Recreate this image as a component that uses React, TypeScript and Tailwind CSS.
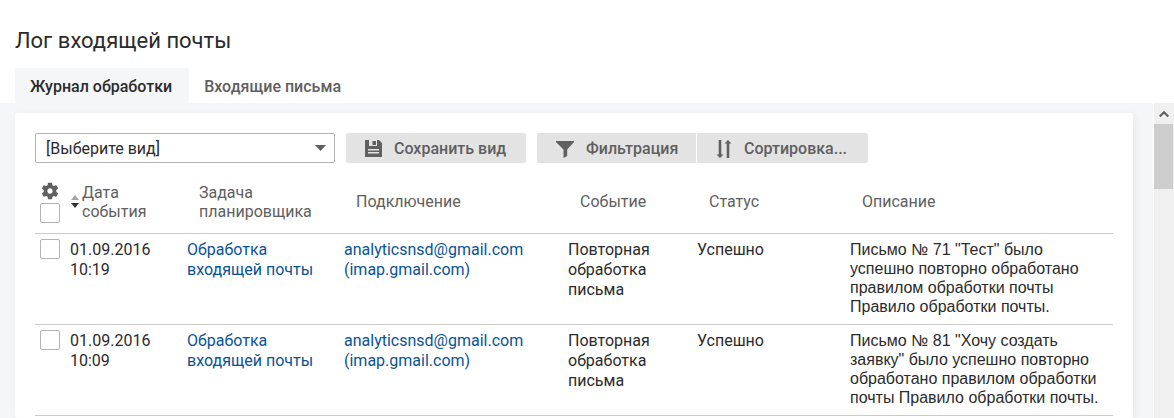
import React from "react";

type Entry = {
  date: string;
  time: string;
  task: string;
  account: string;
  host: string;
  event: string;
  status: string;
  description: string;
};

const entries: Entry[] = [
  {
    date: "01.09.2016",
    time: "10:19",
    task: "Обработка входящей почты",
    account: "analyticsnsd@gmail.com",
    host: "(imap.gmail.com)",
    event: "Повторная обработка письма",
    status: "Успешно",
    description:
      'Письмо № 71 "Тест" было успешно повторно обработано правилом обработки почты Правило обработки почты.',
  },
  {
    date: "01.09.2016",
    time: "10:09",
    task: "Обработка входящей почты",
    account: "analyticsnsd@gmail.com",
    host: "(imap.gmail.com)",
    event: "Повторная обработка письма",
    status: "Успешно",
    description:
      'Письмо № 81 "Хочу создать заявку" было успешно повторно обработано правилом обработки почты Правило обработки почты.',
  },
];

function SaveIcon() {
  return (
    <svg width="17" height="17" viewBox="0 0 17 17" aria-hidden="true">
      <path fill="#606060" d="M0 0h14l3 3v14H0z" />
      <path fill="#e3e3e3" d="M4 0h8v6H4zM3 9h11v1.500H3zM3 12h11v1.500H3z" />
      <path fill="#606060" d="M7.500 1H11v4H7.500z" />
    </svg>
  );
}

function FunnelIcon() {
  return (
    <svg width="18" height="18" viewBox="0 0 18 18" aria-hidden="true">
      <path fill="#606060" d="M0 1h18v1L11.200 9.500V16L7.500 18V9.500L0 2z" />
    </svg>
  );
}

function SortIcon() {
  return (
    <svg width="16" height="18" viewBox="0 0 16 18" aria-hidden="true">
      <path
        fill="#606060"
        d="M2.700 0h2.600v14.500H7.500L4 18 .5 14.500h2.200zM10.700 18h2.600V3.500h2.200L12 0 8.500 3.500h2.200z"
      />
    </svg>
  );
}

function GearIcon() {
  return (
    <svg width="20" height="20" viewBox="0 0 24 24" aria-hidden="true">
      <path
        fill="#606060"
        d="M19.43 12.98c.04-.32.07-.64.07-.98s-.03-.66-.07-.98l2.11-1.65c.19-.15.24-.42.12-.64l-2-3.46c-.12-.22-.39-.3-.61-.22l-2.49 1c-.52-.4-1.08-.73-1.69-.98l-.38-2.65C14.46 2.18 14.25 2 14 2h-4c-.25 0-.46.18-.49.42l-.38 2.65c-.61.25-1.17.59-1.69.98l-2.49-1c-.23-.09-.49 0-.61.22l-2 3.46c-.13.22-.07.49.12.64l2.11 1.65c-.04.32-.07.65-.07.98s.03.66.07.98l-2.11 1.65c-.19.15-.24.42-.12.64l2 3.46c.12.22.39.3.61.22l2.49-1c.52.4 1.08.73 1.69.98l.38 2.65c.03.24.24.42.49.42h4c.25 0 .46-.18.49-.42l.38-2.65c.61-.25 1.17-.59 1.69-.98l2.49 1c.23.09.49 0 .61-.22l2-3.46c.12-.22.07-.49-.12-.64l-2.11-1.65zM12 15.2c-1.77 0-3.2-1.43-3.2-3.2s1.43-3.2 3.2-3.2 3.2 1.43 3.2 3.2-1.43 3.2-3.2 3.2z"
      />
    </svg>
  );
}

function Checkbox({ label }: { label: string }) {
  return (
    <input
      type="checkbox"
      aria-label={label}
      className="block size-5 appearance-none rounded-xs border border-[#b4b4b4] bg-white checked:bg-[#0b5394]"
    />
  );
}

const tabClass = "h-[35px] pt-[2px] pr-[17px] pl-[15px]";
const buttonClass =
  "flex h-[30px] items-center gap-3 bg-[#e3e3e3] pt-px pl-[19px] font-medium text-[#606060] whitespace-nowrap";
const headClass = "pb-[9px] pl-[15px] font-normal";
const cellClass = "pt-[6px] pb-2 pl-[3px]";
const linkClass = "text-[#0b5394] hover:underline";

export default function App() {
  return (
    <div className="flex h-screen flex-col overflow-hidden bg-white font-['Roboto',sans-serif] text-base leading-5 text-[#2b2b2b]">
      <header className="px-[15px] pt-[25px]">
        <h1 className="text-[22px] leading-8">Лог входящей почты</h1>
        <div role="tablist" className="mt-[11px] flex font-medium">
          <button role="tab" aria-selected="true" className={`${tabClass} rounded-t-xs bg-[#f4f6f8]`}>
            Журнал обработки
          </button>
          <button role="tab" aria-selected="false" className={`${tabClass} text-[#606060]`}>
            Входящие письма
          </button>
        </div>
      </header>

      <div className="flex min-h-0 flex-1 bg-[#f4f6f8]">
        <main className="min-w-0 flex-1 overflow-hidden pt-[10px] pr-[20px] pl-[15px]">
          <section className="min-h-full rounded-xs bg-white px-5 pt-5 shadow-[2px_2px_10px_rgba(0,0,0,0.06)]">
            <div className="flex">
              <div className="relative w-[300px]">
                <select
                  aria-label="Вид"
                  className="h-[30px] w-full appearance-none rounded-xs border border-[#b4b4b4] bg-white px-[10px] pt-px"
                >
                  <option>[Выберите вид]</option>
                </select>
                <svg
                  className="pointer-events-none absolute top-3 right-[9px]"
                  width="11"
                  height="6"
                  viewBox="0 0 11 6"
                  aria-hidden="true"
                >
                  <path fill="#606060" d="M0 0h11L5.500 6z" />
                </svg>
              </div>
              <button className={`${buttonClass} ml-[11px] w-[180px] rounded-xs`}>
                <SaveIcon />
                Сохранить вид
              </button>
              <button className={`${buttonClass} ml-[11px] w-[159px] rounded-l-xs`}>
                <FunnelIcon />
                Фильтрация
              </button>
              <button className={`${buttonClass} ml-px w-[171px] rounded-r-xs`}>
                <SortIcon />
                Сортировка...
              </button>
            </div>

            <table className="mt-4 w-full table-fixed border-collapse text-left">
              <colgroup>
                <col className="w-8" />
                <col className="w-[117px]" />
                <col className="w-[157px]" />
                <col className="w-[224px]" />
                <col className="w-[129px]" />
                <col className="w-[153px]" />
                <col />
              </colgroup>
              <thead className="leading-[19px] text-[#606060]">
                <tr className="border-b border-[#cbcbcb]">
                  <th className="pt-[2px] pb-[10px] pl-[5px]">
                    <button aria-label="Настройка столбцов" className="block">
                      <GearIcon />
                    </button>
                    <div className="pt-[2px]">
                      <Checkbox label="Выбрать все" />
                    </div>
                  </th>
                  <th className="pb-[9px] pl-1 font-normal">
                    <div className="flex items-center gap-[3px]">
                      <svg width="8" height="13" viewBox="0 0 8 13" aria-hidden="true">
                        <path fill="#a6a6a6" d="M4 0l4 5H0z" />
                        <path fill="#333" d="M0 8h8l-4 5z" />
                      </svg>
                      <span>
                        Дата
                        <br />
                        события
                      </span>
                    </div>
                  </th>
                  <th className={headClass}>
                    Задача
                    <br />
                    планировщика
                  </th>
                  <th className={headClass}>Подключение</th>
                  <th className={headClass}>Событие</th>
                  <th className={headClass}>Статус</th>
                  <th className={headClass}>Описание</th>
                </tr>
              </thead>
              <tbody className="align-top">
                {entries.map((entry) => (
                  <tr key={entry.time} className="border-b border-[#cbcbcb]">
                    <td className="pt-[5px] pl-[5px]">
                      <Checkbox label={`Выбрать ${entry.date} ${entry.time}`} />
                    </td>
                    <td className={cellClass}>
                      {entry.date}
                      <br />
                      {entry.time}
                    </td>
                    <td className={`${cellClass} pr-5`}>
                      <a href="#task" className={linkClass}>
                        {entry.task}
                      </a>
                    </td>
                    <td className={cellClass}>
                      <a href="#connection" className={linkClass}>
                        {entry.account}
                        <br />
                        {entry.host}
                      </a>
                    </td>
                    <td className={`${cellClass} pr-5`}>{entry.event}</td>
                    <td className={cellClass}>{entry.status}</td>
                    <td className="pt-[6px] pr-2 pb-2 pl-[3px] font-['Liberation_Sans',Arial,sans-serif] leading-[19px]">
                      {entry.description}
                    </td>
                  </tr>
                ))}
              </tbody>
            </table>
          </section>
        </main>

        <div aria-hidden="true" className="w-[21px] shrink-0 border-l border-white bg-[#f0f0f0] pr-px">
          <div className="flex h-[21px] items-center justify-center">
            <svg width="10" height="8" viewBox="0 0 10 8">
              <path fill="none" stroke="#606060" strokeWidth="2.200" d="M.7 6.500L5 2.200l4.300 4.300" />
            </svg>
          </div>
          <div className="h-[65px] bg-[#cdcdcd]" />
        </div>
      </div>
    </div>
  );
}
